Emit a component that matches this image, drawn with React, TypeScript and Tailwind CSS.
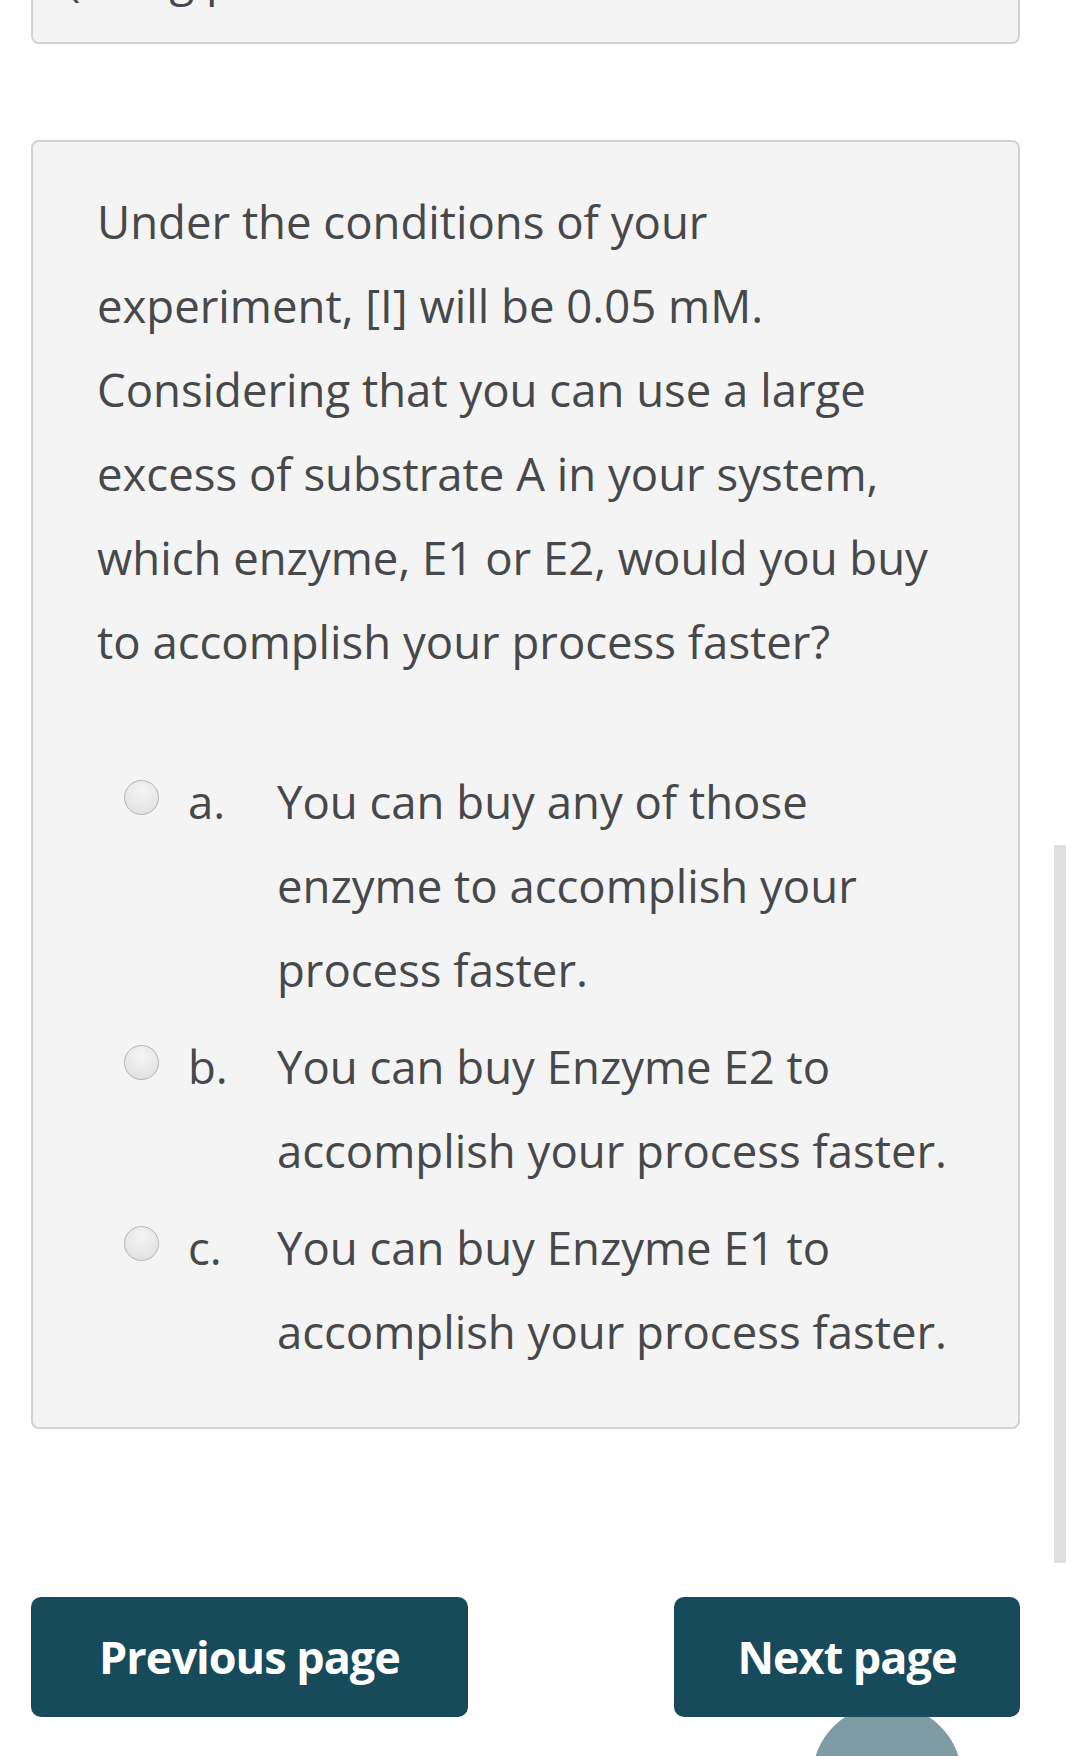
import React from "react";

function Radio() {
  return (
    <span className="block w-[35px] h-[35px] rounded-full border-[1.5px] border-[#b3b3b3] bg-[radial-gradient(circle_at_50%_30%,#f4f4f4,#dedede)]" />
  );
}

const options = [
  { label: "a.", text: "You can buy any of those enzyme to accomplish your process faster." },
  { label: "b.", text: "You can buy Enzyme E2 to accomplish your process faster." },
  { label: "c.", text: "You can buy Enzyme E1 to accomplish your process faster." },
];

export default function App() {
  return (
    <div
      className="relative w-[1066px] h-[1756px] overflow-hidden bg-white text-[#46484a]"
      style={{ fontFamily: "'Open Sans', 'Noto Sans', sans-serif" }}
    >
      <div className="pl-[31px] pr-[46px]">
        <div className="h-[44px] overflow-hidden rounded-b-[8px] border-2 border-t-0 border-[#d2d2d2] bg-[#f4f4f4] pl-[34px]">
          <div className="mt-[-64px] text-[45.5px] leading-[84px] whitespace-nowrap">(using pure</div>
        </div>

        <div className="mt-[96px] rounded-[8px] border-2 border-[#d2d2d2] bg-[#f4f4f4] pt-[37px] pb-[54px] pl-[64px] pr-[66px]">
          <p className="text-[45.5px] leading-[84px]">
            Under the conditions of your experiment, [I] will be 0.05 mM. Considering that you can use a large excess of substrate A in your system, which enzyme, E1 or E2, would you buy to accomplish your process faster?
          </p>
          <div className="mt-[76px] flex flex-col gap-[13px]">
            {options.map((o) => (
              <div key={o.label} className="flex text-[45.5px] leading-[84px]">
                <div className="w-[91px] shrink-0 pl-[27px] pt-[21px]">
                  <Radio />
                </div>
                <div className="w-[89px] shrink-0">{o.label}</div>
                <div className="flex-1">{o.text}</div>
              </div>
            ))}
          </div>
        </div>

        <div className="mt-[168px] flex justify-between relative z-10">
          <button className="w-[437px] h-[120px] rounded-[10px] bg-[#174a5a] text-white text-[45px] font-bold tracking-[-1px]">
            Previous page
          </button>
          <button className="w-[346px] h-[120px] rounded-[10px] bg-[#174a5a] text-white text-[45px] font-bold tracking-[-1px]">
            Next page
          </button>
        </div>
      </div>

      <div className="absolute right-0 top-[845px] w-[12px] h-[718px] bg-[#e0e0e0]" />
      <div className="absolute left-[812px] top-[1704px] w-[150px] h-[150px] rounded-full bg-[#7e9aa3]" />
    </div>
  );
}
